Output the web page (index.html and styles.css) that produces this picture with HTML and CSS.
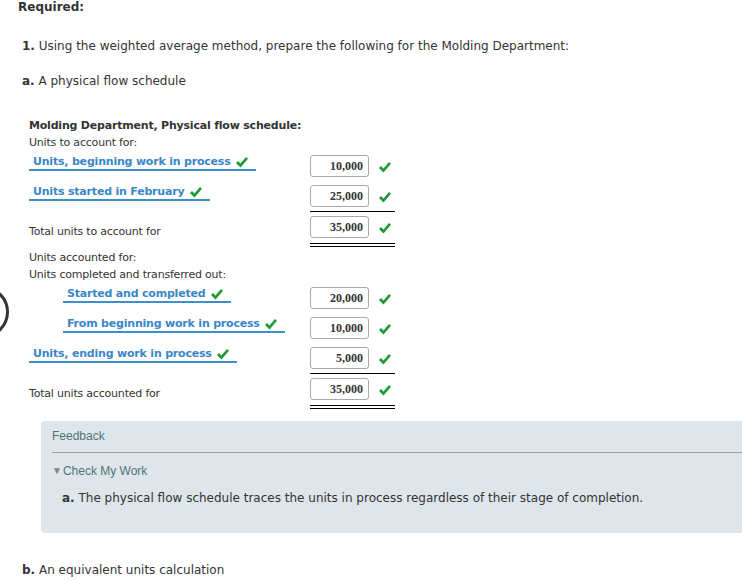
FILE: index.html
```html
<!DOCTYPE html>
<html>
<head>
<meta charset="utf-8">
<link rel="stylesheet" href="styles.css">
</head>
<body>
<div class="nav-circle"></div>
<div class="page">
  <p class="required">Required:</p>
  <p class="q q1"><b>1.</b> Using the weighted average method, prepare the following for the Molding Department:</p>
  <p class="q q2"><b>a.</b> A physical flow schedule</p>

  <section class="schedule">
    <div class="title">Molding Department, Physical flow schedule:</div>
    <div class="text first">Units to account for:</div>

    <div class="row">
      <div class="lab"><span class="ans">Units, beginning work in process <svg class="chk" viewBox="0 0 12 11"><polygon points="0,6 2,4 4.5,6.6 10,0 12,1.8 4.5,10.5"/></svg></span></div>
      <div class="val"><span class="box">10,000</span><svg class="chk" viewBox="0 0 12 11"><polygon points="0,6 2,4 4.5,6.6 10,0 12,1.8 4.5,10.5"/></svg></div>
    </div>
    <div class="row">
      <div class="lab"><span class="ans">Units started in February <svg class="chk" viewBox="0 0 12 11"><polygon points="0,6 2,4 4.5,6.6 10,0 12,1.8 4.5,10.5"/></svg></span></div>
      <div class="val"><span class="box">25,000</span><svg class="chk" viewBox="0 0 12 11"><polygon points="0,6 2,4 4.5,6.6 10,0 12,1.8 4.5,10.5"/></svg></div>
    </div>
    <div class="row total">
      <div class="lab plain">Total units to account for</div>
      <div class="val"><span class="box">35,000</span><svg class="chk" viewBox="0 0 12 11"><polygon points="0,6 2,4 4.5,6.6 10,0 12,1.8 4.5,10.5"/></svg></div>
    </div>

    <div class="text second">Units accounted for:</div>
    <div class="text">Units completed and transferred out:</div>

    <div class="row">
      <div class="lab indent"><span class="ans">Started and completed <svg class="chk" viewBox="0 0 12 11"><polygon points="0,6 2,4 4.5,6.6 10,0 12,1.8 4.5,10.5"/></svg></span></div>
      <div class="val"><span class="box">20,000</span><svg class="chk" viewBox="0 0 12 11"><polygon points="0,6 2,4 4.5,6.6 10,0 12,1.8 4.5,10.5"/></svg></div>
    </div>
    <div class="row">
      <div class="lab indent"><span class="ans">From beginning work in process <svg class="chk" viewBox="0 0 12 11"><polygon points="0,6 2,4 4.5,6.6 10,0 12,1.8 4.5,10.5"/></svg></span></div>
      <div class="val"><span class="box">10,000</span><svg class="chk" viewBox="0 0 12 11"><polygon points="0,6 2,4 4.5,6.6 10,0 12,1.8 4.5,10.5"/></svg></div>
    </div>
    <div class="row">
      <div class="lab"><span class="ans">Units, ending work in process <svg class="chk" viewBox="0 0 12 11"><polygon points="0,6 2,4 4.5,6.6 10,0 12,1.8 4.5,10.5"/></svg></span></div>
      <div class="val"><span class="box">5,000</span><svg class="chk" viewBox="0 0 12 11"><polygon points="0,6 2,4 4.5,6.6 10,0 12,1.8 4.5,10.5"/></svg></div>
    </div>
    <div class="row total">
      <div class="lab plain">Total units accounted for</div>
      <div class="val"><span class="box">35,000</span><svg class="chk" viewBox="0 0 12 11"><polygon points="0,6 2,4 4.5,6.6 10,0 12,1.8 4.5,10.5"/></svg></div>
    </div>
  </section>

  <div class="feedback">
    <div class="fb-title">Feedback</div>
    <div class="fb-toggle"><span class="tri">&#9660;</span>Check My Work</div>
    <p class="fb-text"><b>a.</b> The physical flow schedule traces the units in process regardless of their stage of completion.</p>
  </div>

  <p class="q q3"><b>b.</b> An equivalent units calculation</p>
</div>
</body>
</html>
```

FILE: styles.css
```css
html, body {
  margin: 0;
  padding: 0;
  background: #fff;
  overflow: hidden;
}
body {
  font-family: "DejaVu Sans", Verdana, sans-serif;
  color: #333;
  width: 742px;
  height: 581px;
  position: relative;
}
.nav-circle {
  position: absolute;
  left: -43px;
  top: 286px;
  width: 46px;
  height: 46px;
  border: 3px solid #333;
  border-radius: 50%;
}
.page {
  padding-left: 22px;
}
p { margin: 0; }
.required {
  font-size: 12px;
  font-weight: bold;
  line-height: 16px;
  margin-top: -1px;
  margin-left: -4px;
}
.q {
  font-size: 12px;
  line-height: 16px;
}
.q1 { margin-top: 23px; }
.q2 { margin-top: 19px; }
.schedule {
  margin-left: 7px;
  margin-top: 28px;
  font-size: 11px;
  letter-spacing: -0.2px;
}
.title {
  font-weight: bold;
  line-height: 18px;
}
.text {
  line-height: 17px;
}
.text.first { line-height: 16px; }
.text.second { margin-top: 2px; }
.row {
  display: flex;
}
.lab {
  width: 281px;
  padding-top: 3px;
  box-sizing: border-box;
}
.lab.indent { padding-left: 34px; }
.lab.plain {
  padding-top: 14px;
  line-height: 14px;
}
.ans {
  display: inline-block;
  font-weight: bold;
  color: #3a87c7;
  line-height: 15px;
  padding: 0 8px 0 4px;
  border-bottom: 2px solid #3d8fcc;
}
.ans .chk {
  margin-left: 2px;
  vertical-align: -3px;
}
.chk {
  width: 12px;
  height: 11px;
  fill: #1c9a36;
  flex: none;
}
.val {
  width: 85px;
  display: flex;
  align-items: center;
  gap: 10px;
  padding: 4px 0;
  letter-spacing: 0;
}
.val .chk { margin-top: 2px; }
.row.total .val {
  border-top: 1px solid #000;
  padding: 4px 0 5px;
  border-bottom: 4px double #000;
}
.box {
  box-sizing: border-box;
  width: 59px;
  height: 22px;
  border: 1px solid #a9a9a9;
  border-radius: 3px;
  font-family: "Liberation Serif", "Times New Roman", serif;
  font-weight: bold;
  font-size: 12px;
  line-height: 20px;
  text-align: right;
  padding-right: 5px;
  color: #333;
}
.feedback {
  margin: 12px -12px 0 19px;
  background: #dee6eb;
  border-radius: 4px;
  padding: 8px 0 0 11px;
  height: 112px;
  box-sizing: border-box;
  font-family: "Liberation Sans", Arial, sans-serif;
  font-size: 12px;
  color: #4e7575;
}
.fb-title {
  line-height: 15px;
  padding-bottom: 8px;
  border-bottom: 1px solid #9aa0a3;
}
.fb-toggle {
  margin-top: 11px;
  line-height: 14px;
}
.tri {
  font-size: 10px;
  color: #7d8285;
  vertical-align: 1px;
  margin-right: 1px;
}
.fb-text {
  font-family: "DejaVu Sans", Verdana, sans-serif;
  font-size: 12px;
  color: #333;
  line-height: 16px;
  margin-top: 12px;
  margin-left: 10px;
}
.q3 { margin-top: 29px; }
```
